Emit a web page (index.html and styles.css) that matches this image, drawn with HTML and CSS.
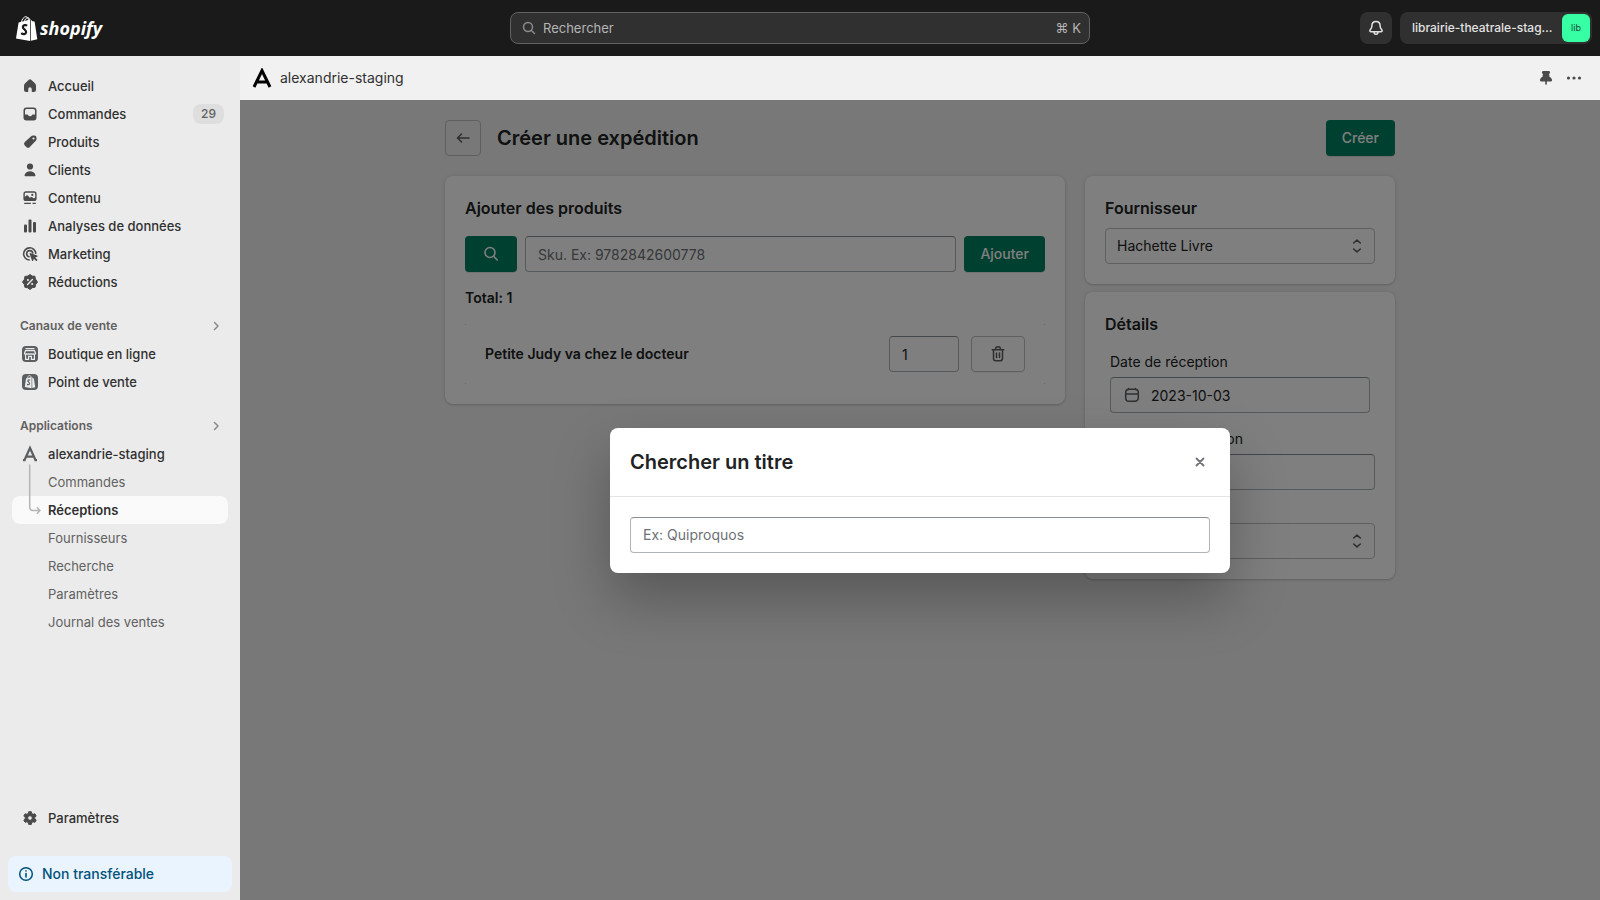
FILE: index.html
```html
<!DOCTYPE html>
<html lang="fr">
<head>
<meta charset="utf-8">
<meta name="viewport" content="width=device-width, initial-scale=1">
<title>alexandrie-staging</title>
<link rel="stylesheet" href="styles.css">
</head>
<body>
<header class="topbar">
  <a class="brand" href="#" aria-label="Shopify">
    <svg class="brand-bag" viewBox="0 0 22 25" width="22" height="25" aria-hidden="true">
      <path fill="#fff" d="M2.6 6.6 14.2 3.4V25L0 22.4z"/>
      <path fill="#fff" d="M14.9 3.7l1.4 1.6 2.3.2L21.3 23.2 14.9 24.7z"/>
      <path fill="none" stroke="#fff" stroke-width="1" d="M5.4 6.4C6 3.2 7.8.9 9.7.7c1.8-.1 2.8 1.8 2.9 4M8.4 5.6C8.8 3.4 10.4 1.6 12 1.700c1 .1 1.700 1 2 2.300"/>
      <path fill="none" stroke="#1a1a1a" stroke-width="2.200" d="M11.200 9.600C9.500 8.600 7 8.900 6.900 10.900c0 2.400 3.500 2.500 3.200 5.300-.2 2.300-2.900 2.600-4.900 1"/>
    </svg>
    <span class="brand-word">shopify</span>
  </a>
  <button class="search" type="button">
    <svg class="icon" viewBox="0 0 20 20" aria-hidden="true"><g fill="none" stroke="#8a8a8a" stroke-width="1.500" stroke-linecap="round"><circle cx="9" cy="9" r="4.500"/><path d="M12.500 12.500l3 3"/></g></svg>
    <span class="search-text">Rechercher</span>
    <kbd>⌘ K</kbd>
  </button>
  <div class="top-actions">
    <button class="bell" type="button" aria-label="Notifications">
      <svg class="icon" viewBox="0 0 20 20" aria-hidden="true"><path fill="none" stroke="#e3e3e3" stroke-width="1.500" stroke-linejoin="round" d="M10 3.500c-2.500 0-4.100 1.900-4.100 4.300 0 2.300-.8 2.900-1.700 3.900-.8 1-.2 2.100.9 2.100h9.800c1.100 0 1.700-1.100.9-2.100-.9-1-1.700-1.600-1.700-3.900 0-2.400-1.600-4.300-4.100-4.300zM8 14c0 1.400.8 2.300 2 2.300s2-.9 2-2.300"/></svg>
    </button>
    <button class="store" type="button"><span class="store-name">librairie-theatrale-stag…</span><span class="avatar">lib</span></button>
  </div>
</header>

<div class="shell">
  <nav class="sidebar" aria-label="Navigation">
    <ul class="nav-list">
      <li><a href="#"><svg class="icon" viewBox="0 0 20 20" aria-hidden="true"><path d="M8.600 3.900a2.100 2.100 0 0 1 2.800 0l3.500 3.300A3.600 3.600 0 0 1 16 9.800v4A2.200 2.200 0 0 1 13.800 16H12.500a.8.8 0 0 1-.8-.8V13a1.700 1.700 0 0 0-3.400 0v2.200a.8.800 0 0 1-.8.800H6.200A2.200 2.200 0 0 1 4 13.800v-4a3.600 3.600 0 0 1 1.100-2.600z"/></svg>Accueil</a></li>
      <li><a href="#"><svg class="icon" viewBox="0 0 20 20" aria-hidden="true"><path fill-rule="evenodd" d="M6.500 3.500h7a3 3 0 0 1 3 3v7a3 3 0 0 1-3 3h-7a3 3 0 0 1-3-3v-7a3 3 0 0 1 3-3zM6.500 5A1.500 1.500 0 0 0 5 6.500v4h2.100c.6 0 .9.300 1.200.9.300.5.900.8 1.700.8s1.400-.3 1.700-.8c.3-.6.600-.9 1.200-.9H15v-4A1.500 1.500 0 0 0 13.500 5z"/></svg>Commandes<span class="badge">29</span></a></li>
      <li><a href="#"><svg class="icon" viewBox="0 0 20 20" aria-hidden="true"><path fill-rule="evenodd" d="M11.200 4.200c.5-.5 1.100-.7 1.800-.7h1.300a2.200 2.200 0 0 1 2.200 2.200V7c0 .7-.2 1.300-.7 1.800l-6 6.100a2.500 2.500 0 0 1-3.500 0l-1.500-1.500a2.500 2.500 0 0 1 0-3.500zM13.500 7.600a1.100 1.100 0 1 0 0-2.200 1.100 1.100 0 0 0 0 2.200z"/></svg>Produits</a></li>
      <li><a href="#"><svg class="icon" viewBox="0 0 20 20" aria-hidden="true"><circle cx="10" cy="6.500" r="3.100"/><path d="M4.600 14.900C5.300 12.700 7.500 11.300 10 11.300s4.700 1.400 5.400 3.600c.2.800-.3 1.400-1 1.400H5.600c-.7 0-1.200-.6-1-1.400z"/></svg>Clients</a></li>
      <li><a href="#"><svg class="icon" viewBox="0 0 20 20" aria-hidden="true"><path fill-rule="evenodd" d="M6 3.300h8a2.600 2.600 0 0 1 2.600 2.600v4.500A2.600 2.600 0 0 1 14 13H6a2.600 2.600 0 0 1-2.600-2.600V5.900A2.600 2.600 0 0 1 6 3.300zM6 4.700c-.7 0-1.200.5-1.200 1.200v3l1.300-1.200c.6-.5 1.400-.4 1.900.1l1.900 2 .7-.6c.6-.4 1.300-.4 1.800.1l.9.900c.8.300 1.900-.5 1.900-1.200V5.900c0-.7-.5-1.200-1.200-1.200z"/><circle cx="12.300" cy="6.900" r="1.100"/><path d="M4.200 14.700h6.600v1.400H4.200zM12.500 14.700h3.300v1.400h-3.300z"/></svg>Contenu</a></li>
      <li><a href="#"><svg class="icon" viewBox="0 0 20 20" aria-hidden="true"><rect x="4" y="8.500" width="3" height="8" rx="1"/><rect x="8.500" y="3.500" width="3" height="13" rx="1"/><rect x="13" y="6" width="3" height="10.500" rx="1"/></svg>Analyses de données</a></li>
      <li><a href="#"><svg class="icon" viewBox="0 0 20 20" aria-hidden="true"><g fill="none" stroke="#4a4a4a" stroke-width="1.600" stroke-linecap="round"><path d="M15.800 9.300A6.100 6.100 0 1 0 9.200 16"/><path d="M12.800 9A3.100 3.100 0 1 0 9 12.700"/></g><path d="M9.600 9.700c-.2-.6.200-.9.700-.7l6.900 2.600c.6.300.5.900 0 1.100l-2 .8 2 2c.7.800-.6 2-1.300 1.300l-2-2-.8 1.900c-.3.600-.9.500-1.100 0z"/></svg>Marketing</a></li>
      <li><a href="#"><svg class="icon" viewBox="0 0 20 20" aria-hidden="true"><path d="M10 2.500l2.200 1.600 2.700.1.500 2.800L17.500 10l-1.900 2.600-.5 2.600-2.800.5L10 17.500l-2.300-1.700-2.800-.5-.5-2.700L2.500 10l2-2.700.4-2.900 2.800-.300z" stroke="#4a4a4a" stroke-linejoin="round"/><g fill="none" stroke="#ebebeb" stroke-linecap="round" stroke-width="1.400"><path d="M7.600 12.400l4.800-4.800"/><path d="M7.900 7.900h.1M12.100 12.100h.1" stroke-width="2"/></g></svg>Réductions</a></li>
    </ul>

    <h2 class="nav-title">Canaux de vente<svg class="icon" viewBox="0 0 20 20" aria-hidden="true"><path fill="none" stroke="#8a8a8a" stroke-width="1.500" stroke-linecap="round" stroke-linejoin="round" d="M8.500 6.500 12 10l-3.500 3.500"/></svg></h2>
    <ul class="nav-list">
      <li><a href="#"><svg class="icon" viewBox="0 0 20 20" aria-hidden="true"><rect x="2" y="2" width="16" height="16" rx="4" fill="#5c5f62"/><g fill="none" stroke="#ebebeb" stroke-width="1.200"><path d="M5.500 4.600h9M5.500 6.600h9l1 2.600c0 1.300-2.200 1.300-2.200 0 0 1.300-2.200 1.300-2.200 0 0 1.300-2.200 1.300-2.200 0 0 1.300-2.200 1.300-2.200 0 0 1.300-2.200 1.300-2.200 0zM5.600 10.500v4.900h3v-3h2.800v3h3v-4.900"/></g></svg>Boutique en ligne</a></li>
      <li><a href="#"><svg class="icon" viewBox="0 0 20 20" aria-hidden="true"><rect x="2" y="2" width="16" height="16" rx="4" fill="#5c5f62"/><path fill="#ebebeb" d="M6 6.600 11.600 5v11.200L4.800 15zM12.200 5.300l1.700 1.500 1.300 8.400-3 .8z"/><path fill="none" stroke="#ebebeb" stroke-width=".8" d="M7.300 6.300c.3-1.600 1.200-2.800 2.200-2.800s1.500.9 1.600 1.900"/><path fill="none" stroke="#5c5f62" stroke-width="1.200" d="M10.100 8.300c-1.300-.7-2.300-.2-2.200.7.100 1.100 1.800 1.300 1.600 2.700-.2 1.100-1.500 1.200-2.400.5"/></svg>Point de vente</a></li>
    </ul>

    <h2 class="nav-title">Applications<svg class="icon" viewBox="0 0 20 20" aria-hidden="true"><path fill="none" stroke="#8a8a8a" stroke-width="1.500" stroke-linecap="round" stroke-linejoin="round" d="M8.500 6.500 12 10l-3.500 3.500"/></svg></h2>
    <ul class="nav-list">
      <li><a href="#"><svg class="icon" viewBox="0 0 20 20" aria-hidden="true"><path fill="none" stroke="#5c5f62" stroke-width="2.200" d="M3 16.200h2.600M14.400 16.200H17M4.200 16.700 10 4l5.800 12.700M6.500 12.600h7"/></svg>alexandrie-staging</a>
        <ul class="subnav">
          <li><a href="#">Commandes</a></li>
          <li><a class="current" href="#" aria-current="page">Réceptions</a></li>
          <li><a href="#">Fournisseurs</a></li>
          <li><a href="#">Recherche</a></li>
          <li><a href="#">Paramètres</a></li>
          <li><a href="#">Journal des ventes</a></li>
        </ul>
        <svg class="branch" viewBox="0 0 14 56" width="14" height="56" aria-hidden="true"><path fill="none" stroke="#b5b5b5" stroke-width="1.500" stroke-linecap="round" stroke-linejoin="round" d="M1.700 1v42.500a3 3 0 0 0 3 3h7M9.300 43.800l2.700 2.700-2.700 2.700"/></svg>
      </li>
    </ul>

    <div class="nav-bottom">
      <ul class="nav-list">
        <li><a href="#"><svg class="icon" viewBox="0 0 20 20" aria-hidden="true"><path fill-rule="evenodd" stroke="#4a4a4a" stroke-width="1" stroke-linejoin="round" d="M8.700 3.700h2.600l.5 1.900 1.200.7 1.900-.5 1.300 2.200-1.400 1.400v1.300l1.400 1.400-1.300 2.200-1.900-.5-1.200.7-.5 1.900H8.700l-.5-1.900-1.200-.7-1.900.5-1.300-2.200 1.400-1.400V9.400L3.800 8l1.300-2.200 1.900.5 1.200-.7zM10 7.700a2.300 2.300 0 1 0 0 4.600 2.300 2.300 0 0 0 0-4.600z"/></svg>Paramètres</a></li>
      </ul>
      <button class="notice" type="button"><svg class="icon" viewBox="0 0 20 20" aria-hidden="true"><g fill="none" stroke="#00527c" stroke-width="1.500" stroke-linecap="round"><circle cx="10" cy="10" r="6.300"/><path d="M10 9.500v3.500M10 6.900v.1" stroke-width="1.600"/></g></svg>Non transférable</button>
    </div>
  </nav>

  <div class="app">
    <header class="app-bar">
      <svg class="icon" viewBox="0 0 20 20" aria-hidden="true"><path fill="none" stroke="#000" stroke-width="3" d="M2 19 10 2.600 18 19M5.500 13.900h9"/></svg>
      <span class="app-name">alexandrie-staging</span>
      <button class="plain" type="button" aria-label="Épingler"><svg class="icon" viewBox="0 0 20 20" aria-hidden="true"><path d="M7.200 3h5.600c1.300 0 1.700 1.600.8 2.500l-.5.500.4 2.800c1.600.7 2.500 2 2.500 3.400 0 .8-.6 1.300-1.300 1.300h-3.900V16a.8.800 0 0 1-1.600 0v-2.500H5.300c-.7 0-1.300-.5-1.300-1.300 0-1.400.9-2.700 2.500-3.400L6.900 6l-.5-.5C5.500 4.600 5.900 3 7.200 3z"/></svg></button>
      <button class="plain" type="button" aria-label="Plus d'actions"><svg class="icon" viewBox="0 0 20 20" aria-hidden="true"><circle cx="4.500" cy="10" r="1.600"/><circle cx="10" cy="10" r="1.600"/><circle cx="15.500" cy="10" r="1.600"/></svg></button>
    </header>

    <main class="stage">
      <div class="page">
        <div class="page-head">
          <button class="btn outline back" type="button" aria-label="Retour"><svg class="icon" viewBox="0 0 20 20" aria-hidden="true"><path fill="none" stroke="#5c5f62" stroke-width="1.600" stroke-linecap="round" stroke-linejoin="round" d="M16 10H4.500M8.500 6 4.500 10l4 4"/></svg></button>
          <h1>Créer une expédition</h1>
          <button class="btn primary" type="button">Créer</button>
        </div>
        <div class="columns">
          <section class="card products">
            <h2>Ajouter des produits</h2>
            <div class="add-row">
              <button class="btn primary" type="button" aria-label="Chercher"><svg class="icon" viewBox="0 0 20 20" aria-hidden="true"><g fill="none" stroke="#fff" stroke-width="1.600" stroke-linecap="round"><circle cx="9" cy="8.500" r="5"/><path d="M12.600 12.300l3.600 3.700"/></g></svg></button>
              <input class="field" type="text" aria-label="Sku" placeholder="Sku. Ex: 9782842600778">
              <button class="btn primary" type="button">Ajouter</button>
            </div>
            <p class="total">Total: 1</p>
            <div class="item">
              <span class="item-name">Petite Judy va chez le docteur</span>
              <input class="field qty" type="text" inputmode="numeric" aria-label="Quantité" value="1">
              <button class="btn outline remove" type="button" aria-label="Supprimer"><svg class="icon" viewBox="0 0 20 20" aria-hidden="true"><path fill="none" stroke="#5c5f62" stroke-width="1.500" stroke-linecap="round" stroke-linejoin="round" d="M4.200 5.700h11.600M7.500 5.500C7.500 3.700 8.300 2.800 10 2.800s2.500.9 2.500 2.700M5.500 6v8.500A2.300 2.300 0 0 0 7.800 16.800h4.400a2.300 2.300 0 0 0 2.300-2.300V6M8.500 9v4.500M11.500 9v4.500"/></svg></button>
            </div>
          </section>
          <div class="side">
            <section class="card supplier">
              <h2>Fournisseur</h2>
              <div class="select-wrap">
                <select class="field" aria-label="Fournisseur"><option>Hachette Livre</option></select>
                <svg class="icon arrows" viewBox="0 0 20 20" aria-hidden="true"><path fill="none" stroke="#5c5f62" stroke-width="1.600" stroke-linecap="round" stroke-linejoin="round" d="M6.700 7 10 4.200 13.300 7M6.700 13l3.300 2.800 3.300-2.800"/></svg>
              </div>
            </section>
            <section class="card details">
              <h2>Détails</h2>
              <div class="group inset">
                <label for="date">Date de réception</label>
                <div class="date-wrap">
                  <input class="field" id="date" type="text" value="2023-10-03">
                  <svg class="icon" viewBox="0 0 20 20" aria-hidden="true"><path fill="none" stroke="#5c5f62" stroke-width="1.500" stroke-linecap="round" d="M7 4.300h6a3.300 3.300 0 0 1 3.300 3.300v5.300a3.300 3.300 0 0 1-3.300 3.300H7a3.300 3.300 0 0 1-3.300-3.300V7.600A3.300 3.300 0 0 1 7 4.300zM3.700 9h12.600M6.500 3.500v1M13.500 3.500v1"/></svg>
                </div>
              </div>
              <div class="group">
                <label for="number">Numéro d'expédition</label>
                <input class="field" id="number" type="text">
              </div>
              <div class="group">
                <label for="status">Statut</label>
                <div class="select-wrap">
                  <select class="field" id="status"><option></option></select>
                  <svg class="icon arrows" viewBox="0 0 20 20" aria-hidden="true"><path fill="none" stroke="#5c5f62" stroke-width="1.600" stroke-linecap="round" stroke-linejoin="round" d="M6.700 7 10 4.200 13.300 7M6.700 13l3.300 2.800 3.300-2.800"/></svg>
                </div>
              </div>
            </section>
          </div>
        </div>
      </div>

      <div class="backdrop">
        <div class="modal" role="dialog" aria-modal="true" aria-labelledby="modal-title">
          <div class="modal-head">
            <h2 id="modal-title">Chercher un titre</h2>
            <button class="plain" type="button" aria-label="Fermer"><svg class="icon" viewBox="0 0 20 20" aria-hidden="true"><path fill="none" stroke="#6d7175" stroke-width="1.800" stroke-linecap="round" d="M6.500 6.500l7 7M13.500 6.500l-7 7"/></svg></button>
          </div>
          <div class="modal-body">
            <input class="field" type="text" aria-label="Titre" placeholder="Ex: Quiproquos">
          </div>
        </div>
      </div>
    </main>
  </div>
</div>
</body>
</html>
```
FILE: styles.css
```css
*, *::before, *::after { box-sizing: border-box; }

body {
  margin: 0;
  min-height: 100vh;
  display: flex;
  flex-direction: column;
  background: #1a1a1a;
  color: #303030;
  font-family: Inter, "Liberation Sans", sans-serif;
  font-size: 13px;
  line-height: 20px;
}
h1, h2, p, ul { margin: 0; padding: 0; }
ul { list-style: none; }
a { color: inherit; text-decoration: none; }
button, input, select { font: inherit; color: inherit; }
button { border: 0; background: none; padding: 0; cursor: pointer; }
.icon { display: block; flex: none; width: 20px; height: 20px; fill: #4a4a4a; }

/* Top bar */
.topbar {
  display: grid;
  grid-template-columns: 1fr minmax(200px, 580px) 1fr;
  align-items: center;
  height: 56px;
  padding: 0 8px;
}
.brand { display: flex; align-items: center; gap: 2px; padding-left: 8px; color: #fff; }
.brand-word { font: italic 700 18px/24px "Open Sans", "Noto Sans", sans-serif; }
.search {
  display: flex;
  align-items: center;
  height: 32px;
  padding: 0 8px;
  border: 1px solid #616161;
  border-radius: 8px;
  background: #303030;
  color: #b5b5b5;
}
.search-text { flex: 1; padding-left: 4px; text-align: left; }
.search kbd { font: inherit; }
.top-actions { display: flex; justify-content: flex-end; gap: 8px; }
.bell { width: 32px; height: 32px; padding: 6px; border-radius: 8px; background: #303030; }
.store {
  display: flex;
  align-items: center;
  justify-content: space-between;
  gap: 8px;
  min-width: 192px;
  height: 32px;
  padding: 2px 2px 2px 12px;
  border-radius: 8px;
  background: #303030;
  color: #e3e3e3;
  font-weight: 500;
  font-size: 12px;
}
.store-name { white-space: nowrap; }
.avatar { width: 28px; height: 28px; border-radius: 6px; background: #36ffa4; color: #1c4a35; font-size: 9px; font-weight: 400; line-height: 28px; }

/* Side navigation */
.shell { flex: 1; display: flex; }
.sidebar {
  flex: none;
  display: flex;
  flex-direction: column;
  width: 240px;
  padding: 16px 12px 8px;
  background: #ebebeb;
}
.nav-list > li { position: relative; }
.nav-list a {
  display: flex;
  align-items: center;
  gap: 8px;
  height: 28px;
  padding: 0 4px 0 8px;
  border-radius: 8px;
  font-weight: 500;
}
.badge { margin-left: auto; padding: 0 8px; border-radius: 8px; background: #dedede; color: #616161; font-size: 12px; }
.nav-title {
  display: flex;
  align-items: center;
  justify-content: space-between;
  height: 28px;
  margin-top: 16px;
  padding: 0 2px 0 8px;
  color: #616161;
  font-size: 12px;
  font-weight: 600;
}
.nav-list .subnav a { padding-left: 36px; color: #616161; font-weight: 400; }
.nav-list .subnav .current { background: #fafafa; color: #303030; font-weight: 600; }
.branch { position: absolute; left: 16px; top: 24px; }
.nav-bottom { margin-top: auto; }
.notice {
  display: flex;
  align-items: center;
  gap: 6px;
  width: calc(100% + 8px);
  height: 36px;
  margin: 24px -4px 0;
  padding: 0 8px;
  border-radius: 8px;
  background: #eaf4ff;
  color: #00527c;
  font-size: 14px;
  font-weight: 500;
}

/* Embedded app */
.app { flex: 1; min-width: 0; display: flex; flex-direction: column; }
.app-bar { display: flex; align-items: center; gap: 8px; height: 44px; padding: 0 16px 0 12px; background: #f1f1f1; }
.app-name { flex: 1; font-size: 14px; }
.stage { position: relative; flex: 1; padding: 20px; background: #f1f1f1; color: #202223; font-size: 14px; }
.page { max-width: 950px; margin: 0 auto; }
.page-head { display: flex; align-items: center; gap: 16px; margin-bottom: 20px; }
.page-head h1 { flex: 1; font-size: 20px; line-height: 28px; font-weight: 600; }
.columns { display: grid; grid-template-columns: 2fr 1fr; gap: 20px; align-items: start; }
.side { display: grid; gap: 8px; }
.card {
  padding: 20px;
  border-radius: 8px;
  background: #fff;
  box-shadow: 0 0 5px rgba(23, 24, 24, 0.1), 0 1px 2px rgba(0, 0, 0, 0.15);
}
.card h2 { font-size: 16px; line-height: 24px; font-weight: 600; }
.btn { height: 36px; padding: 0 16px; border-radius: 4px; }
.primary { background: #008060; color: #fff; font-weight: 500; box-shadow: 0 1px 0 rgba(0, 0, 0, 0.1); }
.outline { border: 1px solid #babfc3; }
.btn.back { padding: 0 7px; }
.field {
  display: block;
  width: 100%;
  min-width: 0;
  height: 36px;
  padding: 0 12px;
  border: 1px solid #aeb4b9;
  border-top-color: #898f94;
  border-radius: 4px;
  background: #fff;
  appearance: none;
}
.field::placeholder { color: #6d7175; opacity: 1; }
.add-row { display: flex; gap: 8px; margin-top: 16px; }
.add-row .field { flex: 1; }
.total { margin: 16px 0; font-weight: 600; }
.item { position: relative; display: flex; align-items: center; gap: 12px; padding: 12px 20px; }
.item::before, .item::after {
  content: "";
  position: absolute;
  left: 0;
  right: 0;
  height: 1px;
  border: solid #d2d5d8;
  border-width: 0 1px;
}
.item::before { top: 0; }
.item::after { bottom: 0; }
.item-name { flex: 1; font-weight: 600; }
.qty { width: 70px; }
.remove { box-shadow: 0 1px 0 rgba(0, 0, 0, 0.05); }
.supplier h2 { margin-bottom: 8px; }
.select-wrap, .date-wrap { position: relative; }
.select-wrap .field { border-color: #babfc3; padding: 0 36px 0 11px; }
.arrows { position: absolute; right: 8px; top: 8px; }
.details { display: grid; gap: 8px; }
.group label { display: block; margin-bottom: 5px; }
.inset { padding: 8px 5px; }
.date-wrap .field { padding-left: 40px; }
.date-wrap .icon { position: absolute; left: 12px; top: 8px; }

/* Modal */
.backdrop {
  position: absolute;
  inset: 0;
  display: flex;
  align-items: center;
  justify-content: center;
  padding: 20px;
  background: rgba(0, 0, 0, 0.5);
}
.modal {
  width: 100%;
  max-width: 620px;
  border-radius: 8px;
  background: #fff;
  box-shadow: 0 26px 56px rgba(0, 0, 0, 0.27);
}
.modal-head { display: flex; align-items: center; justify-content: space-between; padding: 20px; border-bottom: 1px solid #e1e3e5; }
.modal-head h2 { font-size: 20px; line-height: 28px; font-weight: 600; }
.modal-body { padding: 20px; }
```
